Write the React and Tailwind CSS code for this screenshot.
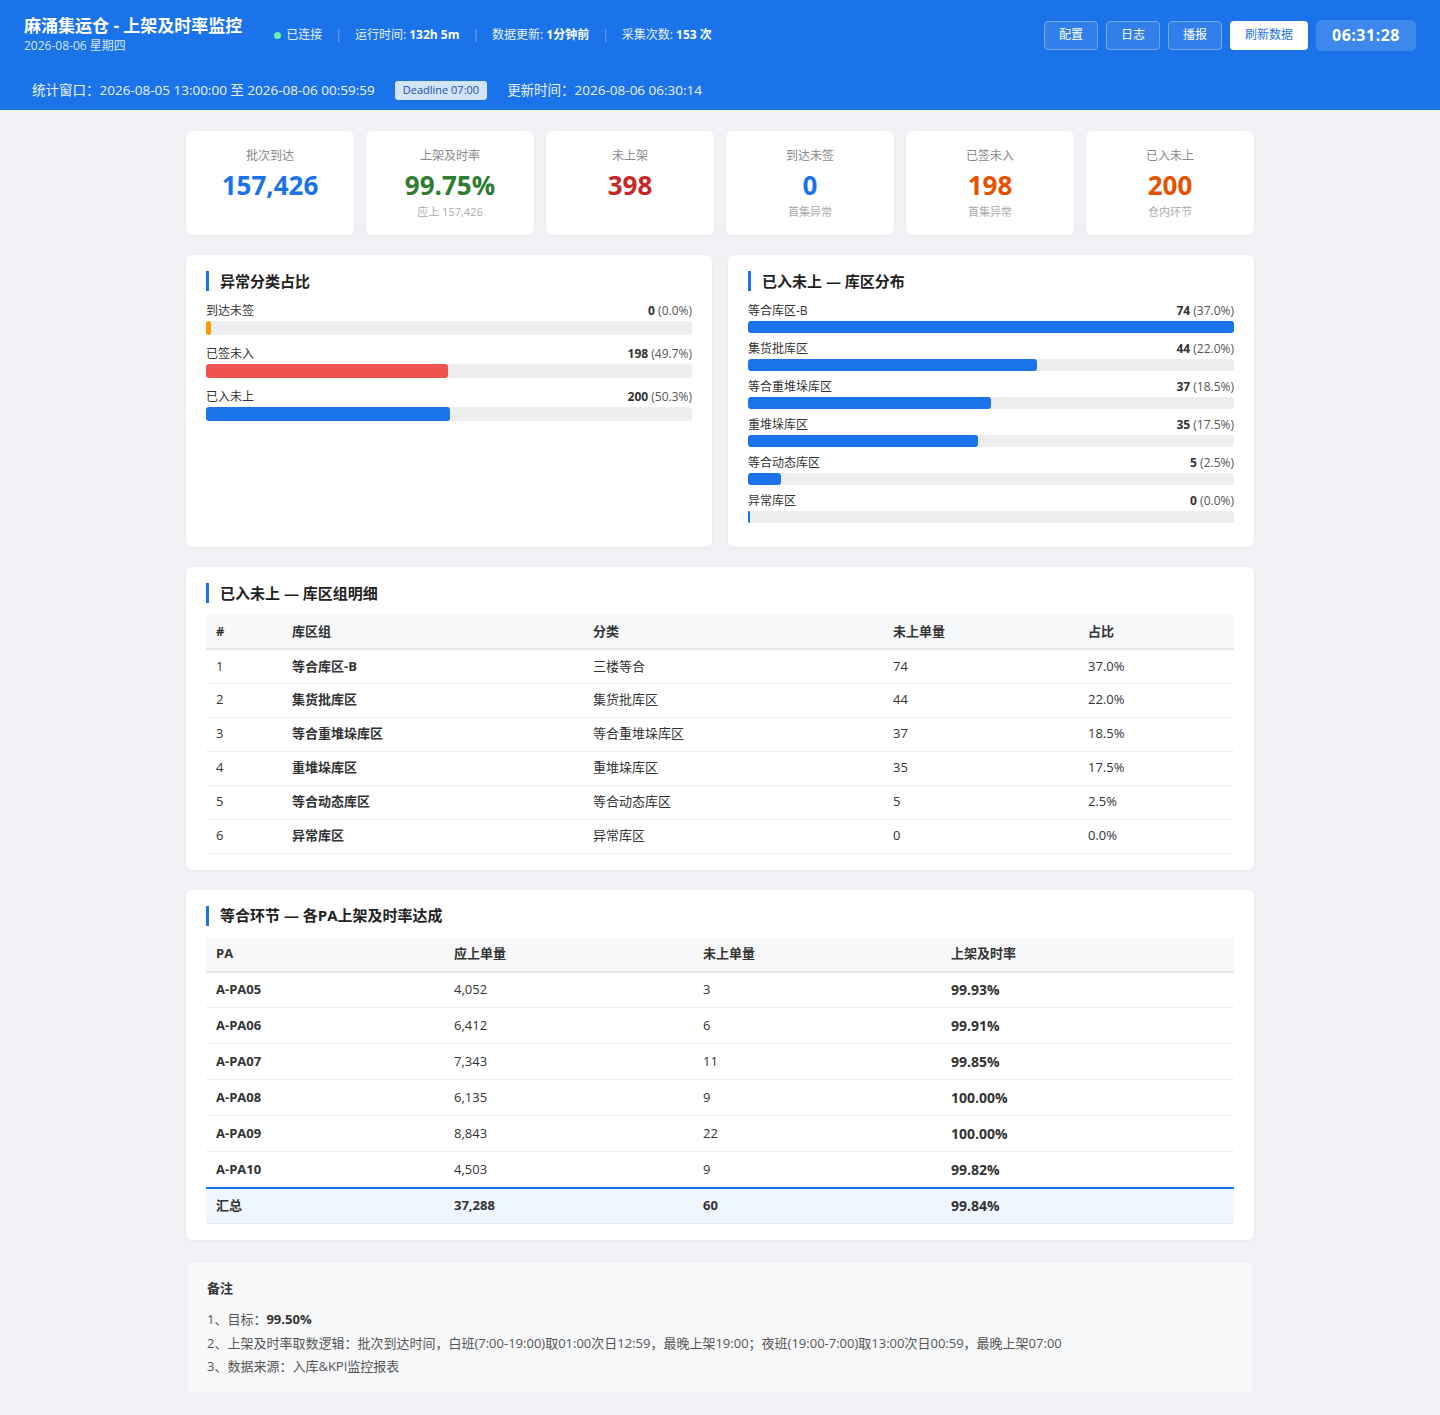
import React from "react";

const FONT = { fontFamily: '"Open Sans", "Noto Sans CJK SC", sans-serif' };

const kpis = [
  { label: "批次到达", value: "157,426", color: "text-[#1a73e8]", sub: "" },
  { label: "上架及时率", value: "99.75%", color: "text-[#2e7d32]", sub: "应上 157,426" },
  { label: "未上架", value: "398", color: "text-[#c62828]", sub: "" },
  { label: "到达未签", value: "0", color: "text-[#1a73e8]", sub: "首集异常" },
  { label: "已签未入", value: "198", color: "text-[#e65100]", sub: "首集异常" },
  { label: "已入未上", value: "200", color: "text-[#e65100]", sub: "仓内环节" },
];

const abnormal = [
  { name: "到达未签", n: 0, pct: "0.0%", w: 0, color: "bg-[#ff9800]" },
  { name: "已签未入", n: 198, pct: "49.7%", w: 49.7, color: "bg-[#ef5350]" },
  { name: "已入未上", n: 200, pct: "50.3%", w: 50.3, color: "bg-[#1a73e8]" },
];

const zones = [
  { name: "等合库区-B", cat: "三楼等合", n: 74, pct: "37.0%", w: 100 },
  { name: "集货批库区", cat: "集货批库区", n: 44, pct: "22.0%", w: 59.5 },
  { name: "等合重堆垛库区", cat: "等合重堆垛库区", n: 37, pct: "18.5%", w: 50 },
  { name: "重堆垛库区", cat: "重堆垛库区", n: 35, pct: "17.5%", w: 47.3 },
  { name: "等合动态库区", cat: "等合动态库区", n: 5, pct: "2.5%", w: 6.8 },
  { name: "异常库区", cat: "异常库区", n: 0, pct: "0.0%", w: 0 },
];

const pas = [
  { pa: "A-PA05", should: "4,052", miss: "3", rate: "99.93%" },
  { pa: "A-PA06", should: "6,412", miss: "6", rate: "99.91%" },
  { pa: "A-PA07", should: "7,343", miss: "11", rate: "99.85%" },
  { pa: "A-PA08", should: "6,135", miss: "9", rate: "100.00%" },
  { pa: "A-PA09", should: "8,843", miss: "22", rate: "100.00%" },
  { pa: "A-PA10", should: "4,503", miss: "9", rate: "99.82%" },
];

function SectionTitle({ children }) {
  return (
    <div className="flex items-center border-l-[3px] border-[#1a73e8] pl-[11px] h-[20px] text-[15px] font-bold text-[#222]">
      {children}
    </div>
  );
}

function Bar({ name, n, pct, w, color, h }) {
  return (
    <div>
      <div className="flex justify-between text-[12px] leading-[18px] text-[#333]">
        <span>{name}</span>
        <span>
          <b className="font-bold">{n}</b> <span className="text-[#555]">({pct})</span>
        </span>
      </div>
      <div className={`mt-[1px] w-full rounded-[3px] bg-[#eeeeee] ${h}`}>
        <div
          className={`h-full rounded-[3px] ${color}`}
          style={{ width: w === 0 ? (color.includes("ff9800") ? "5px" : "2px") : `${w}%` }}
        />
      </div>
    </div>
  );
}

export default function App() {
  return (
    <div style={FONT} className="min-h-[1415px] bg-[#f0f2f5] text-[#333]">
      {/* header */}
      <div className="h-[110px] bg-[#1a73e8] text-white">
        <div className="flex items-center justify-between pl-[24px] pr-[24px] pt-[15px]">
          <div className="flex items-center">
            <div>
              <div className="text-[17px] font-bold leading-[22px]">麻涌集运仓 - 上架及时率监控</div>
              <div className="text-[12px] leading-[18px] text-[#d6e6fc]">2026-08-06 星期四</div>
            </div>
            <div className="ml-[32px] mt-[0px] flex items-center text-[12px] text-[#eaf2fe]">
              <span className="mr-[5px] inline-block h-[7px] w-[7px] rounded-full bg-[#69f0ae]" />
              <span>已连接</span>
              <span className="mx-[13px] text-[#7fb0f2]">|</span>
              <span>运行时间: <b className="font-bold text-white">132h 5m</b></span>
              <span className="mx-[13px] text-[#7fb0f2]">|</span>
              <span>数据更新: <b className="font-bold text-white">1分钟前</b></span>
              <span className="mx-[13px] text-[#7fb0f2]">|</span>
              <span>采集次数: <b className="font-bold text-white">153 次</b></span>
            </div>
          </div>
          <div className="flex items-center gap-[8px] text-[12px]">
            {["配置", "日志", "播报"].map((t) => (
              <button
                key={t}
                className="h-[29px] w-[54px] rounded-[4px] border border-[#76a8f0] bg-[#307fea] text-white"
              >
                {t}
              </button>
            ))}
            <button className="h-[29px] w-[78px] rounded-[4px] bg-white text-[#1a73e8]">刷新数据</button>
            <div className="flex h-[31px] w-[100px] items-center justify-center rounded-[5px] bg-[#3d88ec] text-[16px] font-bold tracking-[0.5px]">
              06:31:28
            </div>
          </div>
        </div>
        <div className="flex items-center pl-[32px] pt-[25px] text-[13.5px] text-[#eef4fe]">
          <span>统计窗口：2026-08-05 13:00:00 至 2026-08-06 00:59:59</span>
          <span className="ml-[20px] flex h-[19px] items-center rounded-[3px] bg-[#d2e3fc] px-[8px] text-[11px] text-[#1a4fa0]">
            Deadline 07:00
          </span>
          <span className="ml-[20px]">更新时间：2026-08-06 06:30:14</span>
        </div>
      </div>

      <div className="mx-auto w-[1068px] pt-[21px] pb-[22px]">
        {/* KPI cards */}
        <div className="grid grid-cols-6 gap-[12px]">
          {kpis.map((k) => (
            <div
              key={k.label}
              className="flex h-[104px] flex-col items-center rounded-[6px] bg-white pt-[17px] shadow-[0_1px_3px_rgba(0,0,0,0.06)]"
            >
              <div className="text-[12px] leading-[16px] text-[#888]">{k.label}</div>
              <div className={`mt-[5px] text-[26px] font-bold leading-[32px] ${k.color}`}>{k.value}</div>
              {k.sub && <div className="mt-[4px] text-[11px] leading-[14px] text-[#aaa]">{k.sub}</div>}
            </div>
          ))}
        </div>

        {/* two panels */}
        <div className="mt-[20px] grid grid-cols-2 gap-[16px]">
          <div className="h-[292px] rounded-[6px] bg-white px-[20px] pt-[16px] shadow-[0_1px_3px_rgba(0,0,0,0.06)]">
            <SectionTitle>异常分类占比</SectionTitle>
            <div className="mt-[11px] flex flex-col gap-[10px]">
              {abnormal.map((a) => (
                <Bar key={a.name} {...a} h="h-[14px]" />
              ))}
            </div>
          </div>
          <div className="h-[292px] rounded-[6px] bg-white px-[20px] pt-[16px] shadow-[0_1px_3px_rgba(0,0,0,0.06)]">
            <SectionTitle>已入未上 — 库区分布</SectionTitle>
            <div className="mt-[11px] flex flex-col gap-[7px]">
              {zones.map((z) => (
                <Bar key={z.name} {...z} color="bg-[#1a73e8]" h="h-[12px]" />
              ))}
            </div>
          </div>
        </div>

        {/* zone detail table */}
        <div className="mt-[20px] rounded-[6px] bg-white px-[20px] pt-[16px] pb-[16px] shadow-[0_1px_3px_rgba(0,0,0,0.06)]">
          <SectionTitle>已入未上 — 库区组明细</SectionTitle>
          <table className="mt-[12px] w-full border-collapse text-left text-[13px]">
            <thead>
              <tr className="h-[34px] border-b-2 border-[#e5e7eb] bg-[#f7f8fa] font-bold text-[#333]">
                <th className="w-[76px] pl-[10px] font-bold">#</th>
                <th className="w-[301px] pl-[10px] font-bold">库区组</th>
                <th className="w-[300px] pl-[10px] font-bold">分类</th>
                <th className="w-[195px] pl-[10px] font-bold">未上单量</th>
                <th className="pl-[10px] font-bold">占比</th>
              </tr>
            </thead>
            <tbody>
              {zones.map((z, i) => (
                <tr key={z.name} className="h-[34px] border-b border-[#eeeeee] text-[#333]">
                  <td className="pl-[10px]">{i + 1}</td>
                  <td className="pl-[10px] font-bold">{z.name}</td>
                  <td className="pl-[10px]">{z.cat}</td>
                  <td className="pl-[10px]">{z.n}</td>
                  <td className="pl-[10px]">{z.pct}</td>
                </tr>
              ))}
            </tbody>
          </table>
        </div>

        {/* PA table */}
        <div className="mt-[20px] rounded-[6px] bg-white px-[20px] pt-[16px] pb-[16px] shadow-[0_1px_3px_rgba(0,0,0,0.06)]">
          <SectionTitle>等合环节 — 各PA上架及时率达成</SectionTitle>
          <table className="mt-[12px] w-full border-collapse text-left text-[13px]">
            <thead>
              <tr className="h-[34px] border-b-2 border-[#e5e7eb] bg-[#f7f8fa] text-[#333]">
                <th className="w-[238px] pl-[10px] font-bold">PA</th>
                <th className="w-[249px] pl-[10px] font-bold">应上单量</th>
                <th className="w-[248px] pl-[10px] font-bold">未上单量</th>
                <th className="pl-[10px] font-bold">上架及时率</th>
              </tr>
            </thead>
            <tbody>
              {pas.map((p) => (
                <tr key={p.pa} className="h-[36px] border-b border-[#eeeeee] text-[#333]">
                  <td className="pl-[10px] font-bold">{p.pa}</td>
                  <td className="pl-[10px]">{p.should}</td>
                  <td className="pl-[10px]">{p.miss}</td>
                  <td className="pl-[10px] text-[14px] font-bold">{p.rate}</td>
                </tr>
              ))}
              <tr className="h-[36px] border-t-2 border-b border-t-[#1a73e8] border-b-[#e5e7eb] bg-[#eef6fe] font-bold text-[#333]">
                <td className="pl-[10px]">汇总</td>
                <td className="pl-[10px]">37,288</td>
                <td className="pl-[10px]">60</td>
                <td className="pl-[10px] text-[14px]">99.84%</td>
              </tr>
            </tbody>
          </table>
        </div>

        {/* notes */}
        <div className="mt-[21px] rounded-[6px] border border-[#eceef1] bg-[#f7f8fa] px-[20px] pt-[17px] pb-[17px] text-[13px] text-[#555]">
          <div className="font-bold leading-[18px] text-[#333]">备注</div>
          <div className="mt-[13px] flex flex-col gap-[5px] leading-[18.5px]">
            <div>1、目标：<b className="font-bold text-[#333]">99.50%</b></div>
            <div>2、上架及时率取数逻辑：批次到达时间，白班(7:00-19:00)取01:00次日12:59，最晚上架19:00；夜班(19:00-7:00)取13:00次日00:59，最晚上架07:00</div>
            <div>3、数据来源：入库&amp;KPI监控报表</div>
          </div>
        </div>
      </div>
    </div>
  );
}
